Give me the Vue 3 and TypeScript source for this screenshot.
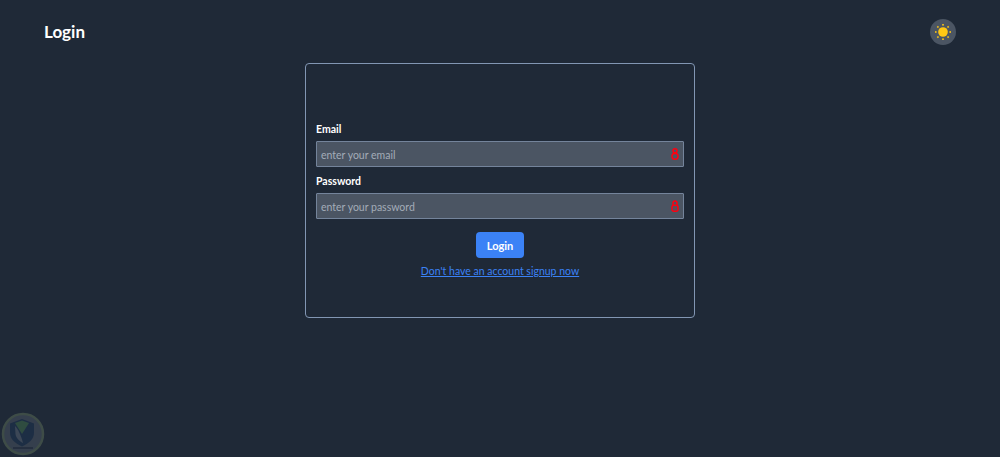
<script setup lang="ts">
import { ref } from 'vue';

const email = ref('');
const password = ref('');
const rays = [0, 45, 90, 135, 180, 225, 270, 315];
</script>

<template>
  <div class="page">
    <header class="topbar">
      <h1 class="title">Login</h1>
      <button class="theme-toggle" type="button" aria-label="Toggle theme">
        <svg width="18" height="18" viewBox="0 0 18 18">
          <circle cx="9" cy="9" r="4.8" fill="#ffc814" />
          <rect
            v-for="r in rays"
            :key="r"
            x="8.2"
            y="1"
            width="1.6"
            height="1.6"
            fill="#ffc814"
            :transform="`rotate(${r} 9 9)`"
          />
        </svg>
      </button>
    </header>

    <main class="main">
      <form class="card" @submit.prevent>
        <label class="label" for="email">Email</label>
        <div class="field">
          <input id="email" v-model="email" class="input" type="email" placeholder="enter your email" />
          <svg class="lock" width="8" height="12" viewBox="0 0 8 12" fill="none" stroke="#ff0010" stroke-width="1.5">
            <circle cx="4" cy="2.8" r="2" />
            <rect x="1" y="5.4" width="6" height="5.8" rx="2.6" />
          </svg>
        </div>
        <label class="label" for="password">Password</label>
        <div class="field">
          <input id="password" v-model="password" class="input" type="password" placeholder="enter your password" />
          <svg class="lock" width="8" height="12" viewBox="0 0 8 12" fill="none" stroke="#ff0010" stroke-width="1.5">
            <path d="M2 5V3a2 2 0 0 1 4 0v2" />
            <rect x="1" y="5.2" width="6" height="6" rx="2" />
            <circle cx="4" cy="8.2" r="0.6" fill="#ff0010" stroke="none" />
          </svg>
        </div>
        <button class="submit" type="submit">Login</button>
        <a class="signup" href="#">Don't have an account signup now</a>
      </form>
    </main>

    <div class="badge">
      <svg width="44" height="44" viewBox="0 0 44 44">
        <circle cx="22" cy="22" r="20" fill="#4b5563" stroke="#5d7058" stroke-width="2.5" />
        <path d="M21 7l12 4.5v9c0 7-5.5 11-12 14-6.500-3-12-7-12-14v-9z" fill="#1c3352" />
        <path d="M14 11l7-2.500 7 2.500-7 11z" fill="#3f6f4a" />
        <path d="M14 14c3 3 6 9 8 17-4-2-7-5-7.500-9z" fill="#5a6675" />
      </svg>
      <span class="badge-line"></span>
    </div>
  </div>
</template>

<style scoped>
.page {
  position: relative;
  height: 457px;
  overflow: hidden;
  background: #1f2937;
  color: #fff;
  font-family: Lato, "Noto Sans", sans-serif;
}

.topbar {
  display: flex;
  align-items: center;
  justify-content: space-between;
  height: 63px;
  padding: 0 44px;
}

.title {
  margin: 0;
  font-size: 17px;
  font-weight: 700;
}

.theme-toggle {
  display: flex;
  align-items: center;
  justify-content: center;
  width: 26px;
  height: 26px;
  padding: 0;
  border: none;
  border-radius: 50%;
  background: #4b5563;
}

.main {
  display: flex;
  justify-content: center;
}

.card {
  display: flex;
  flex-direction: column;
  box-sizing: border-box;
  width: 390px;
  height: 255px;
  padding: 56px 10px 0;
  border: 1px solid #8296b3;
  border-radius: 4px;
}

.label {
  margin-bottom: 3px;
  font-size: 10.5px;
  font-weight: 700;
  line-height: 18px;
}

.field {
  position: relative;
  margin-bottom: 5px;
}

.input {
  display: block;
  box-sizing: border-box;
  width: 100%;
  height: 26px;
  padding: 1px 4px 0;
  border: 1px solid #74849b;
  border-radius: 1px;
  outline: none;
  background: #4b5563;
  color: #fff;
  font-family: inherit;
  font-size: 10.5px;
}

.input::placeholder {
  color: #a3acb8;
}

.lock {
  position: absolute;
  top: 7px;
  right: 5px;
}

.submit {
  align-self: center;
  width: 48px;
  height: 26px;
  margin-top: 8px;
  padding: 0;
  border: none;
  border-radius: 4px;
  background: #3b82f6;
  color: #fff;
  font-family: inherit;
  font-size: 11px;
  font-weight: 700;
}

.signup {
  align-self: center;
  margin-top: 5px;
  color: #3b82f6;
  font-size: 10.5px;
  line-height: 16px;
}

.badge {
  position: absolute;
  left: 1px;
  bottom: 1px;
  width: 44px;
  height: 44px;
  opacity: 0.5;
}

.badge-line {
  position: absolute;
  left: 12px;
  top: 35px;
  width: 20px;
  height: 2px;
  background: #2b3648;
}
</style>

<style>
body {
  background: #1f2937;
}
</style>
